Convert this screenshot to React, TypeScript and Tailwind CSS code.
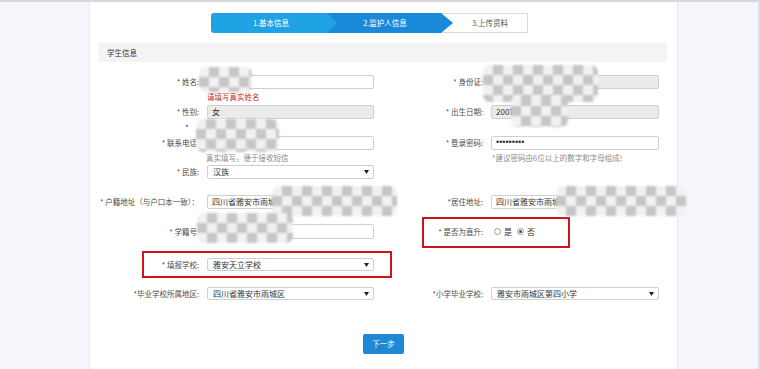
import type { ReactNode } from 'react'
import { clsx } from 'clsx'

// privacy mosaics laid over the screenshot (page coords)
const mosaics = [
  'left-[199px] top-[67px] w-[53px] h-[25px]',
  'left-[483px] top-[65px] w-[115px] h-[37px]',
  'left-[511px] top-[96px] w-[57px] h-[31px]',
  'left-[196px] top-[119px] w-[83px] h-[33px]',
  'left-[272px] top-[186px] w-[125px] h-[30px]',
  'left-[197px] top-[213px] w-[96px] h-[30px]',
  'left-[556px] top-[186px] w-[130px] h-[30px]',
]

function Label({ children }: { children: ReactNode }) {
  return (
    <div className="w-[117px] shrink-0 pr-[8px] text-right text-[7.5px] leading-none whitespace-nowrap text-[#4a4a4a]">
      {children}
    </div>
  )
}

function TextBox({ value, disabled, w = 'w-[167px]', dots }: { value?: string; disabled?: boolean; w?: string; dots?: boolean }) {
  return (
    <div
      className={clsx(
        'flex h-full items-center rounded-[2px] border border-[#cfcfcf] px-[4px] text-[#333]',
        w,
        disabled ? 'bg-[#ebebeb]' : 'bg-white',
        dots ? "font-['Liberation_Sans',sans-serif] text-[9px]" : 'text-[8px]'
      )}
    >
      {value}
    </div>
  )
}

function SelectBox({ value, w = 'w-[167px]' }: { value: string; w?: string }) {
  return (
    <div
      className={clsx(
        'flex h-full items-center justify-between rounded-[2px] border border-[#cfcfcf] bg-white pl-[5px] pr-[4px] text-[8px] text-[#333]',
        w
      )}
    >
      <span>{value}</span>
      <svg width="5" height="4" viewBox="0 0 5 4">
        <path d="M0 0H5L2.5 4Z" fill="#222" />
      </svg>
    </div>
  )
}

function Radio({ checked }: { checked?: boolean }) {
  return (
    <span className="flex h-[7px] w-[7px] items-center justify-center rounded-full border border-[#9a9a9a] bg-white">
      {checked && <span className="h-[3px] w-[3px] rounded-full bg-[#444]" />}
    </span>
  )
}

function Row({ left, right, className }: { left?: ReactNode; right?: ReactNode; className: string }) {
  return (
    <div className={clsx('relative flex', className)}>
      <div className="flex w-[284px] items-stretch">{left}</div>
      <div className="flex items-stretch">{right}</div>
    </div>
  )
}

function Field({ label, children }: { label: string; children: ReactNode }) {
  return (
    <>
      <div className="flex items-center">
        <Label>{label}</Label>
      </div>
      {children}
    </>
  )
}

export default function App() {
  return (
    <div className="relative h-[369px] w-[760px] overflow-hidden border-r-2 border-[#dcdfe4] bg-[#f4f6fb] font-['Microsoft_YaHei','Noto_Sans_CJK_SC',sans-serif]">
      <div className="h-[2px] bg-[#d6d8dc]" />

      <div className="ml-[89px] flex h-[367px] w-[589px] flex-col border-x border-[#e6e8ec] bg-white">
        {/* Steps */}
        <div className="mt-[11px] ml-[121px] flex h-[20px] w-[317px] text-[7.5px] text-white">
          <div className="relative z-20 flex w-[126px] items-center justify-center rounded-l-[3px] bg-[#1fa3e4] pr-[6px] [clip-path:polygon(0_0,116px_0,126px_50%,116px_100%,0_100%)]">
            1.基本信息
          </div>
          <div className="relative z-10 -ml-[10px] flex w-[126px] items-center justify-center bg-[#1a89d9] pl-[2px] pr-[12px] [clip-path:polygon(0_0,114px_0,126px_50%,114px_100%,0_100%)]">
            2.监护人信息
          </div>
          <div className="-ml-[12px] flex flex-1 items-center justify-center border border-l-0 border-[#d8dadd] bg-white pl-[12px] text-[#555]">
            3.上传资料
          </div>
        </div>

        {/* Section header */}
        <div className="mt-[10px] ml-[8px] flex h-[19px] w-[569px] items-center bg-[#f4f4f5] pl-[9px] text-[7.5px] text-[#333]">
          学生信息
        </div>

        {/* Form */}
        <Row
          className="mt-[13px] h-[14px]"
          left={<Field label="* 姓名:"><TextBox /></Field>}
          right={<Field label="* 身份证:"><TextBox disabled w="w-[168px]" /></Field>}
        />
        <div className="flex h-[16px] items-center pl-[117px] text-[7.5px] text-[#c62828]">请填写真实姓名</div>
        <Row
          className="h-[14px]"
          left={<Field label="* 性别:"><TextBox value="女" disabled /></Field>}
          right={<Field label="* 出生日期:"><TextBox value="2007" disabled w="w-[168px]" /></Field>}
        />
        <div className="flex h-[17px] items-center pl-[95px] text-[8px] text-[#444]">*</div>
        <Row
          className="h-[14px]"
          left={<Field label="* 联系电话:"><TextBox /></Field>}
          right={<Field label="* 登录密码:"><TextBox value="•••••••••" dots w="w-[168px]" /></Field>}
        />
        <div className="flex h-[15px] items-center text-[7.5px] text-[#8a8a8a]">
          <span className="w-[284px] pl-[116px]">真实填写，便于接收短信</span>
          <span className="pl-[118px]">*建议密码由6位以上的数字和字母组成!</span>
        </div>
        <Row className="h-[14px]" left={<Field label="* 民族:"><SelectBox value="汉族" /></Field>} />
        <Row
          className="mt-[16px] h-[14px]"
          left={<Field label="* 户籍地址（与户口本一致）："><TextBox value="四川省雅安市雨城区" /></Field>}
          right={<Field label="*居住地址:"><TextBox value="四川省雅安市雨城区" w="w-[168px]" /></Field>}
        />
        <Row
          className="mt-[15px] h-[15px]"
          left={<Field label="* 学籍号:"><TextBox /></Field>}
          right={
            <Field label="* 是否为直升:">
              <div className="flex items-center gap-[3px] pl-[3px] text-[8px] text-[#333]">
                <Radio />
                <span className="mr-[2px]">是</span>
                <Radio checked />
                <span>否</span>
              </div>
              <div className="absolute top-[-7px] left-[332px] h-[31px] w-[148px] border-2 border-[#d0121b]" />
            </Field>
          }
        />
        <Row
          className="mt-[19px] h-[13px]"
          left={
            <Field label="* 填报学校:">
              <SelectBox value="雅安天立学校" />
              <div className="absolute top-[-7px] left-[52px] h-[27px] w-[250px] border-2 border-[#d0121b]" />
            </Field>
          }
        />
        <Row
          className="mt-[16px] h-[13px]"
          left={<Field label="*毕业学校所属地区:"><SelectBox value="四川省雅安市雨城区" /></Field>}
          right={<Field label="*小学毕业学校:"><SelectBox value="雅安市雨城区第四小学" w="w-[168px]" /></Field>}
        />

        <div className="mt-[34px] flex justify-center">
          <button className="h-[20px] w-[41px] rounded-[2px] bg-[#1e88d3] text-[7.5px] text-white">下一步</button>
        </div>
      </div>

      {mosaics.map((m) => (
        <div
          key={m}
          className={clsx(
            'absolute rounded-[7px] bg-[image:repeating-conic-gradient(#c6c6c6_0%_25%,#f1f1f1_0%_50%)] bg-size-[20px_20px] blur-[1px]',
            m
          )}
        />
      ))}
    </div>
  )
}
